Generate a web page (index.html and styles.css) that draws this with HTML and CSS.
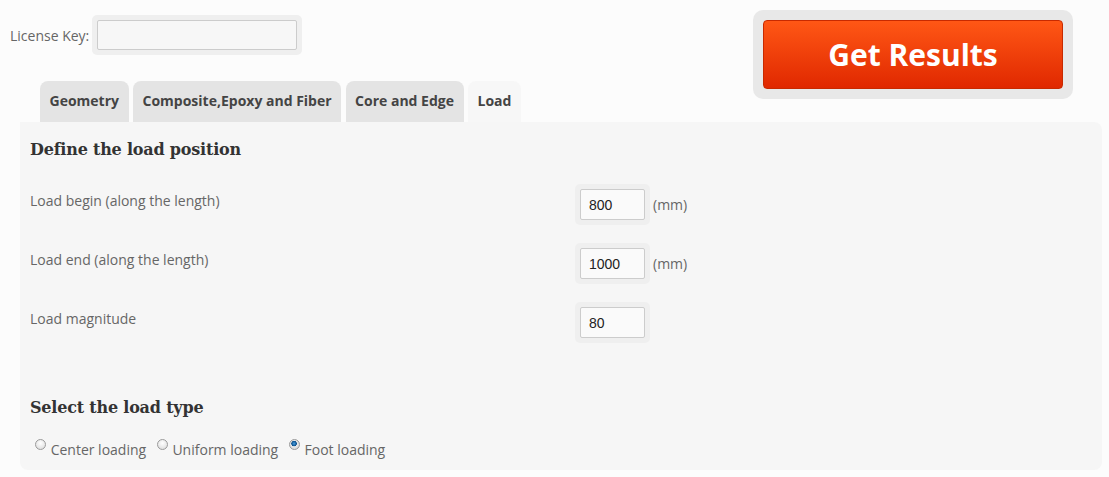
FILE: index.html
```html
<!DOCTYPE html>
<html lang="en">
<head>
    <meta charset="UTF-8">
    <title>Sandwich Panel Calculator</title>
    <link rel="stylesheet" href="styles.css">
</head>
<body>
    <div id="top">
        <div class="license">
            <label for="licenseKey">License Key:</label>
            <span class="field-wrap"><input type="text" id="licenseKey" class="key-input"></span>
        </div>
        <div class="results-wrap">
            <button type="button" class="results-btn">Get Results</button>
        </div>
    </div>

    <ul class="tabs">
        <li class="tab">Geometry</li>
        <li class="tab">Composite,Epoxy and Fiber</li>
        <li class="tab">Core and Edge</li>
        <li class="tab active">Load</li>
    </ul>

    <div class="panel">
        <h3>Define the load position</h3>

        <div class="row">
            <span class="row-label">Load begin (along the length)</span>
            <span class="field-wrap"><input type="text" class="num-input" value="800"></span>
            <span class="unit">(mm)</span>
        </div>
        <div class="row">
            <span class="row-label">Load end (along the length)</span>
            <span class="field-wrap"><input type="text" class="num-input" value="1000"></span>
            <span class="unit">(mm)</span>
        </div>
        <div class="row">
            <span class="row-label">Load magnitude</span>
            <span class="field-wrap"><input type="text" class="num-input" value="80"></span>
        </div>

        <h3 class="second">Select the load type</h3>

        <div class="radios">
            <label><input type="radio" name="loadType"> Center loading</label>
            <label><input type="radio" name="loadType"> Uniform loading</label>
            <label><input type="radio" name="loadType" checked> Foot loading</label>
        </div>
    </div>
</body>
</html>
```

FILE: styles.css
```css
body {
    background-color: #fcfcfc;
    color: #666;
    font-family: "Open Sans", Arial, sans-serif;
    font-size: 14px;
    margin: 0;
    padding: 0 7px 0 20px;
}

#top {
    display: flex;
    justify-content: space-between;
    align-items: flex-start;
    height: 81px;
}

.license {
    display: flex;
    align-items: center;
    margin: 15px 0 0 -10px;
}

.license label {
    margin-right: 3px;
    color: #666;
}

.field-wrap {
    display: inline-block;
    background-color: #efefef;
    padding: 5px;
    border-radius: 5px;
}

.key-input {
    width: 200px;
    height: 30px;
    box-sizing: border-box;
    border: 1px solid #ccc;
    border-radius: 2px;
    background-color: #f7f7f7;
    display: block;
}

.results-wrap {
    margin: 10px 29px 0 0;
    background-color: #e8e8e8;
    padding: 10px;
    border-radius: 10px;
}

.results-btn {
    display: block;
    width: 300px;
    height: 69px;
    border: 1px solid #c82a00;
    border-radius: 4px;
    background: linear-gradient(#ff5715, #e02800);
    color: #fff;
    font-family: "Open Sans", Arial, sans-serif;
    font-size: 30px;
    font-weight: bold;
    cursor: pointer;
}

.tabs {
    list-style: none;
    margin: 0 0 0 20px;
    padding: 0;
    display: flex;
    gap: 4.5px;
    height: 41px;
}

.tab {
    background-color: #e4e4e4;
    color: #444;
    font-weight: bold;
    font-size: 14px;
    padding: 0 9.5px;
    line-height: 40px;
    border-radius: 8px 8px 0 0;
}

.active {
    background-color: #f7f7f7;
}

.panel {
    background-color: #f6f6f6;
    border-radius: 0 8px 8px 8px;
    padding: 18px 10px 10px;
    height: 320px;
}

h3 {
    font-family: "DejaVu Serif", Georgia, serif;
    font-size: 16px;
    font-weight: bold;
    color: #333;
    margin: 0 0 25px;
    letter-spacing: -0.2px;
}

h3.second {
    margin: 55px 0 22px;
}

.row {
    display: flex;
    align-items: center;
    height: 41px;
    margin-bottom: 18px;
}

.row-label {
    width: 545px;
    margin-top: -8px;
}

.num-input {
    display: block;
    width: 65px;
    height: 31px;
    box-sizing: border-box;
    border: 1px solid #ccc;
    border-radius: 2px;
    padding: 0 8px;
    font-family: "Liberation Sans", Arial, sans-serif;
    font-size: 14px;
    color: #222;
    background-color: #fafafa;
}

.unit {
    margin-left: 3px;
}

.radios {
    font-size: 14px;
}

.radios label {
    margin-right: 2px;
}

.radios input {
    appearance: none;
    -webkit-appearance: none;
    margin: 0 1px 0 5px;
    width: 11px;
    height: 11px;
    border: 1px solid #9a9a9a;
    border-radius: 50%;
    background: radial-gradient(circle at 50% 35%, #fff, #d8d8d8);
    vertical-align: 5px;
    box-sizing: border-box;
}

.radios input:checked {
    background: radial-gradient(circle at 45% 40%, #4aa0e0 0, #0a4f8c 2.5px, #e8e8e8 3px, #d0d0d0 100%);
}
```
